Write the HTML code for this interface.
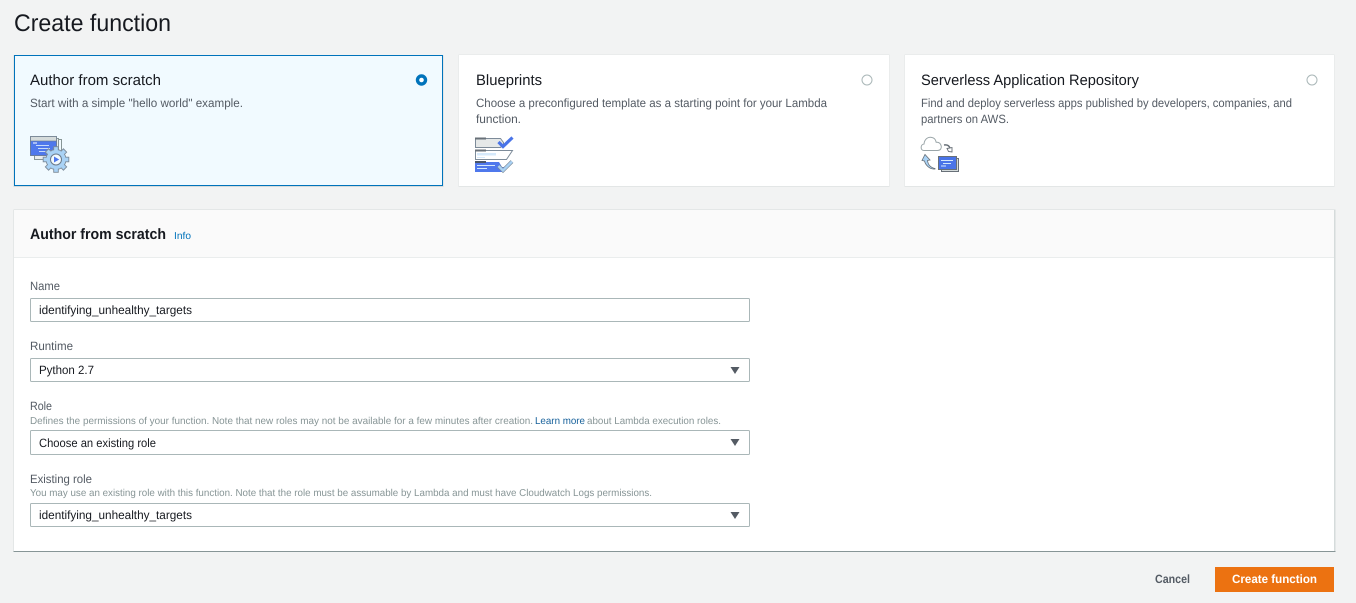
<!DOCTYPE html>
<html lang="en">
<head>
<meta charset="utf-8">
<title>Create function</title>
<style>
html,body{margin:0;padding:0;width:1356px;height:603px;overflow:hidden;background:#f2f3f3}
svg{display:block}
text{font-family:"Liberation Sans",sans-serif;text-rendering:geometricPrecision}
.t{fill:#16191f}
.d{fill:#545b64;font-size:12px}
.l{fill:#545b64;font-size:12px}
.v{fill:#16191f;font-size:12px}
.h{fill:#879596;font-size:10px}
.card{font-size:15px;fill:#16191f}
.f{fill:#fff;stroke:#aab7b8;stroke-width:1}
.a{fill:#545b64}
.ic{filter:blur(.3px)}
</style>
</head>
<body>
<svg width="1356" height="603" viewBox="0 0 1356 603" xmlns="http://www.w3.org/2000/svg">
<rect width="1356" height="603" fill="#f2f3f3"/>
<text x="14" y="31" class="t" font-size="24" textLength="157" lengthAdjust="spacingAndGlyphs">Create function</text>

<!-- cards -->
<rect x="13.500" y="55" width="430" height="132" fill="#d5dbdb"/>
<rect x="14.500" y="55.500" width="428" height="130" fill="#f1faff" stroke="#0073bb"/>
<rect x="458.500" y="54.500" width="431" height="132.500" fill="#e3e6e6"/>
<rect x="459" y="55" width="430" height="131" fill="#fff"/>
<rect x="904.500" y="54.500" width="430" height="132.500" fill="#e3e6e6"/>
<rect x="905" y="55" width="429" height="131" fill="#fff"/>

<text x="30" y="85" class="card" textLength="131" lengthAdjust="spacingAndGlyphs">Author from scratch</text>
<text x="30" y="107" class="d" textLength="213" lengthAdjust="spacingAndGlyphs">Start with a simple "hello world" example.</text>
<circle cx="421.500" cy="80" r="4" fill="#fff" stroke="#0073bb" stroke-width="3.400"/>

<text x="476" y="85" class="card" textLength="66" lengthAdjust="spacingAndGlyphs">Blueprints</text>
<text x="476" y="107" class="d" textLength="351" lengthAdjust="spacingAndGlyphs">Choose a preconfigured template as a starting point for your Lambda</text>
<text x="476" y="123" class="d" textLength="45" lengthAdjust="spacingAndGlyphs">function.</text>
<circle cx="867" cy="80" r="5" fill="#fff" stroke="#aab7b8"/>

<text x="921" y="85" class="card" textLength="218" lengthAdjust="spacingAndGlyphs">Serverless Application Repository</text>
<text x="921" y="107" class="d" textLength="371" lengthAdjust="spacingAndGlyphs">Find and deploy serverless apps published by developers, companies, and</text>
<text x="921" y="123" class="d" textLength="88" lengthAdjust="spacingAndGlyphs">partners on AWS.</text>
<circle cx="1312" cy="80" r="5" fill="#fff" stroke="#aab7b8"/>

<!-- icon 1 -->
<g class="ic">
<rect x="38.500" y="139.500" width="23" height="19" fill="#f1faff" stroke="#879596"/>
<rect x="34.500" y="138.500" width="24" height="21" fill="#eaeded" stroke="#879596"/>
<rect x="30.500" y="136.500" width="26" height="19" fill="#d5dbdb" stroke="#7d8b99"/>
<rect x="30.500" y="141" width="26" height="14.500" fill="#4f78ec" stroke="#6b7a8a" stroke-width=".6"/>
<rect x="33" y="142.500" width="4" height="1" fill="#fff"/>
<path d="M36 145.500h13M38 148.500h12M39 151.500h12" stroke="#c8dcfa" stroke-width="1"/>
<g transform="translate(56 159.500)" fill="#a9d2f5" stroke="#7d8b99" stroke-width=".9">
<circle r="10"/>
<rect x="-2.300" y="-12.800" width="4.600" height="5"/>
<rect x="-2.300" y="-12.800" width="4.600" height="5" transform="rotate(45)"/>
<rect x="-2.300" y="-12.800" width="4.600" height="5" transform="rotate(90)"/>
<rect x="-2.300" y="-12.800" width="4.600" height="5" transform="rotate(135)"/>
<rect x="-2.300" y="-12.800" width="4.600" height="5" transform="rotate(180)"/>
<rect x="-2.300" y="-12.800" width="4.600" height="5" transform="rotate(225)"/>
<rect x="-2.300" y="-12.800" width="4.600" height="5" transform="rotate(270)"/>
<rect x="-2.300" y="-12.800" width="4.600" height="5" transform="rotate(315)"/>
<circle r="9.500" stroke="none"/>
<circle r="5.500" fill="#f1faff" stroke="#6b7a8a" stroke-width="1"/>
<path d="M-2 -3l5.200 3-5.200 3z" fill="#4f78ec" stroke="none"/>
</g>
</g>

<!-- icon 2 -->
<g class="ic">
<path d="M475.500 138.500h25l3 4 0 2-3 3h-25z" fill="#e5e8e8" stroke="#7d8b99"/>
<rect x="475" y="137.500" width="11" height="2" fill="#687078"/>
<path d="M498.500 142l4.500 4.500 9.500-9" fill="none" stroke="#4a74e8" stroke-width="3.200"/>
<path d="M475.500 150.500h37l-6 9h-31z" fill="#fff" stroke="#7d8b99"/>
<rect x="475" y="149.500" width="11" height="2" fill="#687078"/>
<rect x="477" y="153" width="19" height="2.500" fill="#d5e9fb"/>
<rect x="477" y="157" width="8" height="1" fill="#d5e9fb"/>
<path d="M475 162h24l3 5 3 0-3 5h-27z" fill="#4f78ec"/>
<rect x="475" y="161" width="11" height="2" fill="#4a5568"/>
<path d="M477 165.500h18M477 168.500h10" stroke="#d5e9fb" stroke-width="1"/>
<path d="M498.500 166l4.500 4.500 9-9" fill="none" stroke="#7d8b99" stroke-width="3.800"/>
<path d="M498.500 166l4.500 4.500 9-9" fill="none" stroke="#a9d2f5" stroke-width="2.400"/>
</g>

<!-- icon 3 -->
<g class="ic">
<path d="M924 150.500c-3.800 0-3.800-6 0-6.500 .5-5 4-7.500 8-6.500 2.500 .5 3.800 2.500 4.200 4.800 5.500-1 7.500 8.200 1.300 8.200z" fill="#fff" stroke="#9aa5a8"/>
<path d="M944 145c3-.5 5 .5 6 3" fill="none" stroke="#687078" stroke-width="1.500"/>
<path d="M947 148.500l5-1v4.500l-3.500-.5z" fill="#fff" stroke="#687078" stroke-width=".9"/>
<path d="M935 168.500c-4.500-1-7-4-7.500-8l2.500-.500-5-5.500-3 6 2.500 .5c1 4 5 8.500 10.500 8z" fill="#a9d2f5" stroke="#687078" stroke-width=".8"/>
<rect x="941.500" y="158.500" width="17" height="13" fill="#d5dbdb" stroke="#687078"/>
<rect x="938.500" y="156.500" width="18" height="13" fill="#4a74e8" stroke="#687078"/>
<path d="M941 160.500h12M943 163.500h8M941 166h5" stroke="#d5e9fb" stroke-width="1"/>
</g>

<!-- panel -->
<rect x="13.500" y="209.500" width="1322" height="342" fill="#d5dbdb"/>
<rect x="13.500" y="551" width="1322" height="1" fill="#879596"/>
<rect x="14" y="210" width="1320" height="341" fill="#fff"/>
<rect x="14" y="210" width="1320" height="47" fill="#fafafa"/>
<rect x="14" y="257" width="1320" height="1" fill="#eaeded"/>

<text x="30" y="239" font-size="15" font-weight="700" class="t" textLength="136" lengthAdjust="spacingAndGlyphs">Author from scratch</text>
<text x="174" y="239" font-size="10" fill="#0073bb" textLength="17" lengthAdjust="spacingAndGlyphs">Info</text>

<text x="30" y="290" class="l" textLength="30" lengthAdjust="spacingAndGlyphs">Name</text>
<rect x="30.500" y="298.500" width="719" height="23" rx="1" class="f"/>
<text x="39" y="314" class="v" textLength="153" lengthAdjust="spacingAndGlyphs">identifying_unhealthy_targets</text>

<text x="30" y="350" class="l" textLength="43" lengthAdjust="spacingAndGlyphs">Runtime</text>
<rect x="30.500" y="358.500" width="719" height="23" rx="1" class="f"/>
<text x="39" y="374" class="v" textLength="55" lengthAdjust="spacingAndGlyphs">Python 2.7</text>
<path d="M730.500 367h9l-4.500 7z" class="a"/>

<text x="30" y="410" class="l" textLength="22" lengthAdjust="spacingAndGlyphs">Role</text>
<text x="30" y="424" class="h" textLength="503" lengthAdjust="spacingAndGlyphs">Defines the permissions of your function. Note that new roles may not be available for a few minutes after creation.</text>
<text x="535" y="424" font-size="10" fill="#16609a" textLength="50" lengthAdjust="spacingAndGlyphs">Learn more</text>
<text x="587" y="424" class="h" textLength="134" lengthAdjust="spacingAndGlyphs">about Lambda execution roles.</text>
<rect x="30.500" y="430.500" width="719" height="24" rx="1" class="f"/>
<text x="39" y="447" class="v" textLength="117" lengthAdjust="spacingAndGlyphs">Choose an existing role</text>
<path d="M730.500 439h9l-4.500 7z" class="a"/>

<text x="30" y="483" class="l" textLength="62" lengthAdjust="spacingAndGlyphs">Existing role</text>
<text x="30" y="496" class="h" textLength="622" lengthAdjust="spacingAndGlyphs">You may use an existing role with this function. Note that the role must be assumable by Lambda and must have Cloudwatch Logs permissions.</text>
<rect x="30.500" y="503.500" width="719" height="23" rx="1" class="f"/>
<text x="39" y="519" class="v" textLength="153" lengthAdjust="spacingAndGlyphs">identifying_unhealthy_targets</text>
<path d="M730.500 512h9l-4.500 7z" class="a"/>

<text x="1155" y="583" font-size="12" font-weight="700" fill="#545b64" textLength="35" lengthAdjust="spacingAndGlyphs">Cancel</text>
<rect x="1215" y="567" width="119" height="25" fill="#ec7211"/>
<text x="1232" y="583" font-size="12" font-weight="700" fill="#fff" textLength="85" lengthAdjust="spacingAndGlyphs">Create function</text>
</svg>
</body>
</html>
